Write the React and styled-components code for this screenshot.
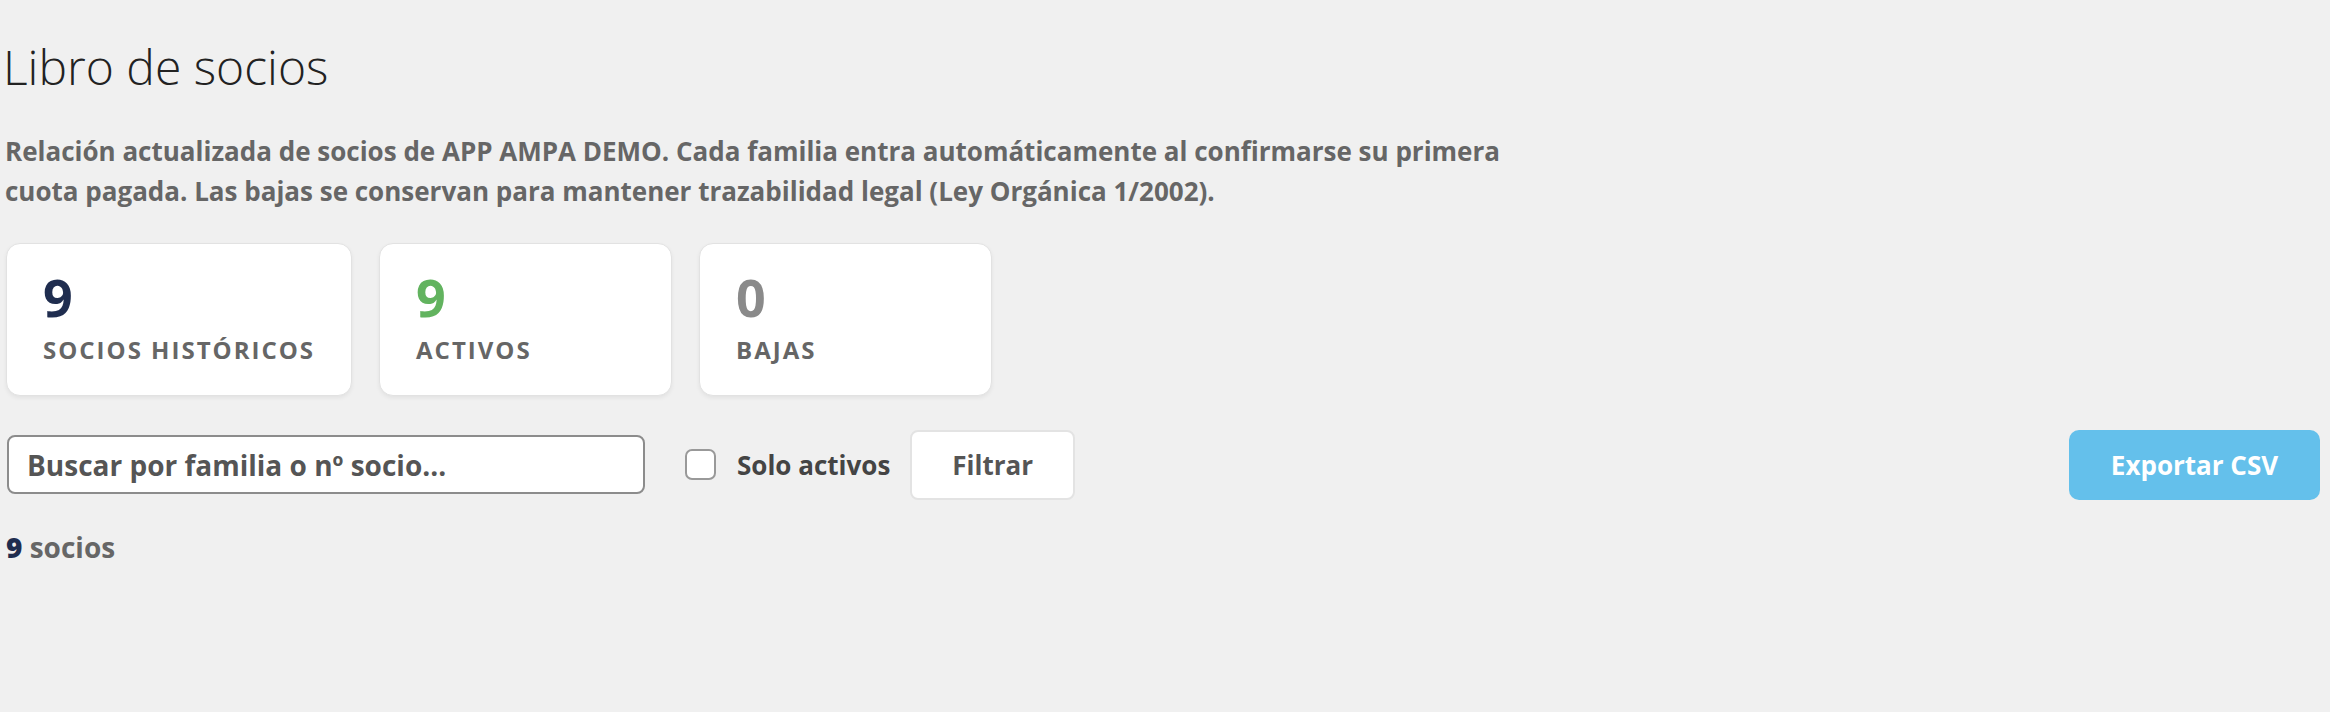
import React from 'react';
import styled, { createGlobalStyle } from 'styled-components';

const GlobalStyle = createGlobalStyle`
  html, body {
    margin: 0;
    padding: 0;
    background: #f0f0f0;
  }
  body {
    font-family: "Open Sans", "Noto Sans", sans-serif;
  }
`

const Page = styled.main`
  padding: 38px 10px 40px 6px;
  min-height: 712px;
  box-sizing: border-box;
`
const Title = styled.h1`
  margin: 0 0 35px -3px;
  font-size: 48px;
  line-height: 1.2;
  font-weight: 300;
  color: #222;
`
const Intro = styled.p`
  margin: 0 0 32px -1px;
  max-width: 1510px;
  font-size: 26px;
  line-height: 40px;
  font-weight: 700;
  color: #666;
`
const Stats = styled.section`
  display: flex;
  gap: 27px;
  margin-bottom: 34px;
`
const StatCard = styled.div`
  box-sizing: border-box;
  min-width: 293px;
  padding: 22px 36px 27px;
  background: #fff;
  border: 1px solid #e2e2e2;
  border-radius: 14px;
  box-shadow: 0 2px 4px rgba(0, 0, 0, 0.06);
`
const StatValue = styled.div`
  font-size: 52px;
  line-height: 1.2;
  font-weight: 700;
  color: ${(p) => p.$color};
`
const StatLabel = styled.div`
  margin-top: 4px;
  font-size: 24px;
  line-height: 36px;
  font-weight: 700;
  letter-spacing: 2px;
  text-transform: uppercase;
  color: #666;
`
const Toolbar = styled.div`
  display: flex;
  align-items: center;
  margin-bottom: 26px;
`
const Search = styled.input`
  box-sizing: border-box;
  width: 638px;
  height: 59px;
  margin-left: 1px;
  padding: 0 18px;
  border: 2px solid #8c8c8c;
  border-radius: 8px;
  background: #fff;
  font-family: inherit;
  font-size: 28px;
  font-weight: 700;
  color: #333;
  outline: none;

  &::placeholder {
    color: #555;
    opacity: 1;
  }
`
const CheckLabel = styled.label`
  display: flex;
  align-items: center;
  gap: 21px;
  margin-left: 40px;
  font-size: 26px;
  font-weight: 700;
  color: #444;
`
const Check = styled.input`
  appearance: none;
  box-sizing: border-box;
  width: 31px;
  height: 31px;
  margin: 0;
  border: 2px solid #999;
  border-radius: 7px;
  background: #fff;
`
const Button = styled.button`
  box-sizing: border-box;
  height: 70px;
  padding: 0 ${(p) => (p.$primary ? '40px' : '40px')};
  border: ${(p) => (p.$primary ? 'none' : '2px solid #e3e3e3')};
  border-radius: ${(p) => (p.$primary ? '10px' : '8px')};
  background: ${(p) => (p.$primary ? '#64c0eb' : '#fff')};
  color: ${(p) => (p.$primary ? '#fff' : '#555')};
  font-family: inherit;
  font-size: 26px;
  font-weight: 700;
`
const FilterButton = styled(Button)`
  margin-left: 20px;
`
const ExportButton = styled(Button)`
  margin-left: auto;
  width: 251px;
  padding: 0;
`
const Count = styled.div`
  font-size: 28px;
  line-height: 42px;
  font-weight: 700;
  color: #666;

  strong {
    color: #1f2d4f;
  }
`

const stats = [
  { value: 9, label: 'Socios históricos', color: '#1f2d4f' },
  { value: 9, label: 'Activos', color: '#62b35f' },
  { value: 0, label: 'Bajas', color: '#8a8a8a' },
];

export default function App() {
  return (
    <Page>
      <GlobalStyle />
      <Title>Libro de socios</Title>
      <Intro>
        Relación actualizada de socios de APP AMPA DEMO. Cada familia entra automáticamente al confirmarse su primera
        cuota pagada. Las bajas se conservan para mantener trazabilidad legal (Ley Orgánica 1/2002).
      </Intro>
      <Stats>
        {stats.map((s) => (
          <StatCard key={s.label}>
            <StatValue $color={s.color}>{s.value}</StatValue>
            <StatLabel>{s.label}</StatLabel>
          </StatCard>
        ))}
      </Stats>
      <Toolbar>
        <Search placeholder="Buscar por familia o nº socio..." />
        <CheckLabel>
          <Check type="checkbox" />
          Solo activos
        </CheckLabel>
        <FilterButton>Filtrar</FilterButton>
        <ExportButton $primary>Exportar CSV</ExportButton>
      </Toolbar>
      <Count>
        <strong>9</strong> socios
      </Count>
    </Page>
  );
}
